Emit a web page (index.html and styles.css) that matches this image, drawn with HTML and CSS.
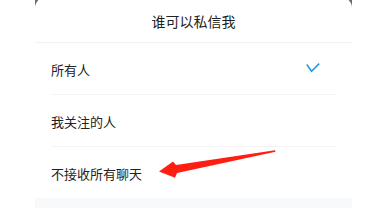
FILE: index.html
```html
<!DOCTYPE html>
<html lang="zh">
<head>
<meta charset="utf-8">
<link rel="stylesheet" href="styles.css">
</head>
<body>
<div class="screen">
  <div class="card">
    <div class="title">谁可以私信我</div>
    <ul class="options">
      <li class="option"><span>所有人</span>
        <svg class="check" width="14" height="10" viewBox="0 0 14 10"><polyline points="0.8,1.5 5.5,8.3 13.2,0.6" fill="none" stroke="#1a9be6" stroke-width="1.5"/></svg>
      </li>
      <li class="option"><span>我关注的人</span></li>
      <li class="option"><span>不接收所有聊天</span></li>
    </ul>
  </div>
  <div class="footer"></div>
</div>
<svg class="arrow" width="381" height="208" viewBox="0 0 381 208">
  <polygon points="159,171.5 173,161.5 176,165 275,150.3 275.5,151.8 177,173 175,177.7" fill="#fe1e12"/>
</svg>
</body>
</html>
```
FILE: styles.css
```css
html, body {
  margin: 0;
  padding: 0;
  background: #ffffff;
  overflow: hidden;
}
body {
  width: 381px;
  height: 208px;
  position: relative;
  font-family: "Noto Sans CJK SC", "Noto Sans", sans-serif;
  color: #222222;
}
.screen {
  margin-left: 35px;
  width: 317px;
  background: #6a6a6a;
}
.card {
  background: #ffffff;
  border-radius: 11px 11px 0 0;
  margin-top: -3px;
  position: relative;
}
.title {
  padding-top: 3px;
  line-height: 42px;
  text-align: center;
  font-size: 14px;
  border-bottom: 1px solid #f2f2f2;
}
.options {
  list-style: none;
  margin: 0;
  padding: 0 16px;
}
.option {
  display: flex;
  align-items: center;
  justify-content: space-between;
  padding-top: 1px;
  height: 50px;
  font-size: 13px;
  border-bottom: 1px solid #f3f3f3;
}
.option:last-child {
  border-bottom: none;
}
.check {
  margin-right: 16px;
  margin-top: -2px;
}
.footer {
  height: 10px;
  background: #f8f9fb;
}
.arrow {
  position: absolute;
  left: 0;
  top: 0;
  pointer-events: none;
}
```
